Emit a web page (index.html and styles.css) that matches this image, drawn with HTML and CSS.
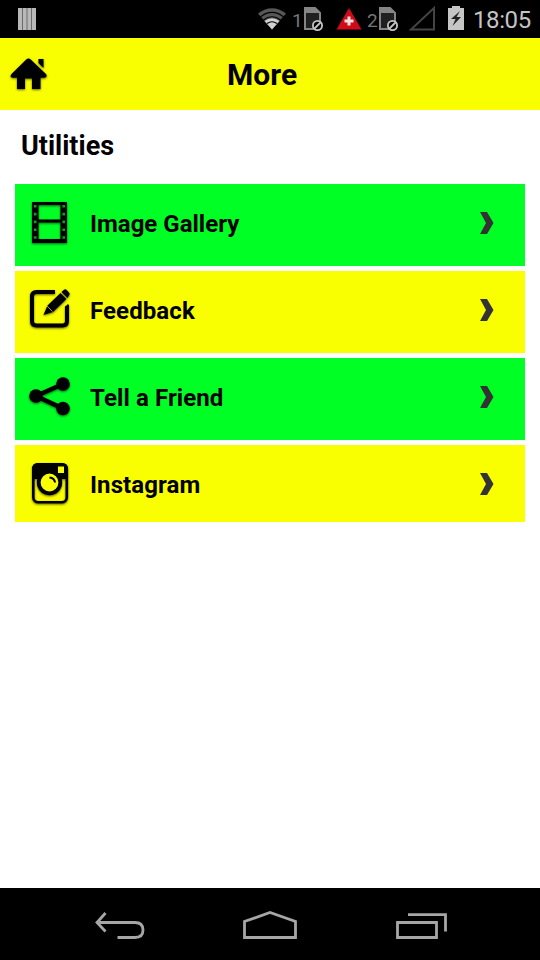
FILE: index.html
```html
<!DOCTYPE html>
<html lang="en">
<head>
    <meta charset="UTF-8">
    <meta name="viewport" content="width=device-width, initial-scale=1.0">
    <title>More</title>
    <link rel="stylesheet" href="styles.css">
</head>
<body>
    <!-- Status Bar -->
    <div class="status-bar">
        <svg class="bars" width="18" height="22" viewBox="0 0 18 22">
            <path fill="#b8b8b8" d="M0 0h18v22H0z"/>
            <path stroke="#6a6a6a" d="M4.5 0v22M9 0v22M13.5 0v22"/>
        </svg>
        <svg class="wifi" width="30" height="22" viewBox="0 0 30 22">
            <path fill="#575757" d="M0 5.5Q14-5 28 5.5L14 21.500z"/>
            <path fill="#d0d0d0" d="M6.500 13Q14 7.500 21.500 13L14 21.500z"/>
            <path fill="none" stroke="#000" stroke-width="1.1" d="M2.500 8.700Q14 0 25.500 8.700M5.500 12Q14 5.500 22.500 12M9 15.500Q14 12 19 15.500"/>
        </svg>
        <span class="sim-number">1</span>
        <svg class="sim" width="20" height="24" viewBox="0 0 20 24">
            <path fill="#202020" stroke="#858585" stroke-width="2" d="M1 1h10l5 5v16H1z"/>
            <path fill="#858585" d="M1 1h10l5 5H1z"/>
            <circle cx="13.500" cy="18.500" r="4.600" fill="#000" stroke="#c4c4c4" stroke-width="1.800"/>
            <path stroke="#c4c4c4" stroke-width="1.800" d="M10.500 21.500l6-6"/>
        </svg>
        <svg class="alert" width="26" height="22" viewBox="0 0 26 22">
            <path fill="#cf0a1b" d="M13 0l12.500 21.500H.5z"/>
            <path stroke="#eee2dc" stroke-width="3" d="M13 8.500v9M8.500 13h9"/>
        </svg>
        <span class="sim-number second">2</span>
        <svg class="sim" width="20" height="24" viewBox="0 0 20 24">
            <path fill="#202020" stroke="#858585" stroke-width="2" d="M1 1h10l5 5v16H1z"/>
            <path fill="#858585" d="M1 1h10l5 5H1z"/>
            <circle cx="13.500" cy="18.500" r="4.600" fill="#000" stroke="#c4c4c4" stroke-width="1.800"/>
            <path stroke="#c4c4c4" stroke-width="1.800" d="M10.500 21.500l6-6"/>
        </svg>
        <svg class="signal" width="28" height="26" viewBox="0 0 28 26">
            <path fill="none" stroke="#444" stroke-width="2" d="M26 3v21.500H3z"/>
        </svg>
        <svg class="battery" width="16" height="24" viewBox="0 0 16 24">
            <path fill="#c6c6c6" d="M4 0h8v2h4v22H0V2h4z"/>
            <path fill="#222" d="M12 5L3 13h4.500L4.500 20l8.500-9H8.500z"/>
        </svg>
        <span class="clock">18:05</span>
    </div>

    <!-- Header -->
    <div class="header">
        <svg class="home-icon shadow" width="38" height="36" viewBox="0 0 38 36">
            <path d="M18.500 1.500q-1.200 0-2.500 1.200L1.500 17q-2.500 3.500 1.500 3.800h4V32h8V21.500h7V32h8.500V20.800H34q4-.5 2-3.800L21 2.700q-1.300-1.200-2.500-1.200zM28.500 2H33.500v9l-5-5z"/>
        </svg>
        <h1>More</h1>
    </div>

    <!-- Utilities List -->
    <div class="content">
        <h2>Utilities</h2>
        <div class="menu">
            <div class="menu-item green">
                <svg class="icon shadow" viewBox="0 0 44 44">
                    <path fill-rule="evenodd" d="M4 1h35v41H4zM10.500 4v14.500h22V4zM10.500 21.500V38h22V21.500z"/>
                    <path stroke="#00a818" stroke-width="2.600" stroke-dasharray="2.600 5.200" d="M7.200 4v36M35.700 4v36"/>
                </svg>
                <span class="label">Image Gallery</span>
                <svg class="arrow" viewBox="0 0 16 22"><path d="M1 0h7l6.500 11L8 22H1l6-11z"/></svg>
            </div>
            <div class="menu-item yellow">
                <svg class="icon shadow" viewBox="0 0 44 44">
                    <path fill="none" stroke="#000" stroke-width="4" d="M27 4H8.500Q4 4 4 8.500v24.500q0 4.500 4.500 4.500h26q4.500 0 4.500-4.500V18l-.5-.5"/>
                    <path d="M15.500 27l4-9.500L32.500 5l6 6L25 24zM33.500 4l2.500-2.200q1.200-1 2.400 0l2.800 2.900q1 1.200 0 2.400L39.500 10z"/>
                    <path stroke="#aaa900" d="M19 18l5.500 5.500"/>
                </svg>
                <span class="label wide">Feedback</span>
                <svg class="arrow" viewBox="0 0 16 22"><path d="M1 0h7l6.500 11L8 22H1l6-11z"/></svg>
            </div>
            <div class="menu-item green">
                <svg class="icon shadow" viewBox="0 0 44 44">
                    <path fill="none" stroke="#000" stroke-width="4.500" d="M35 9L8 21l27 12.500"/>
                    <circle cx="35" cy="9" r="6.800"/>
                    <circle cx="8" cy="21" r="6.800"/>
                    <circle cx="35" cy="33.500" r="6.800"/>
                </svg>
                <span class="label wide">Tell a Friend</span>
                <svg class="arrow" viewBox="0 0 16 22"><path d="M1 0h7l6.500 11L8 22H1l6-11z"/></svg>
            </div>
            <div class="menu-item yellow last">
                <svg class="icon shadow" viewBox="0 0 44 44">
                    <rect x="5.300" y="2.300" width="33.500" height="38" rx="5" fill="none" stroke="#000" stroke-width="2.600"/>
                    <path d="M4 17V7q0-6 6-6h24q6 0 6 6v10z"/>
                    <path fill="#f9ff00" d="M30 4.500h6v6.500h-6z"/>
                    <circle cx="21.500" cy="20.500" r="10.800" fill="#f9ff00" stroke="#000" stroke-width="3.800"/>
                    <path fill="none" stroke="#000" stroke-width="2" d="M21.500 15.500q5 .5 5.500 5"/>
                </svg>
                <span class="label wide">Instagram</span>
                <svg class="arrow" viewBox="0 0 16 22"><path d="M1 0h7l6.500 11L8 22H1l6-11z"/></svg>
            </div>
        </div>
    </div>

    <!-- Navigation Bar -->
    <div class="nav-bar">
        <svg width="52" height="30" viewBox="0 0 52 30">
            <path d="M11.500 2L3 11.500l8.500 9M3 11.500h38q8 0 8 7.500t-8 7.500H23.500"/>
        </svg>
        <svg width="56" height="30" viewBox="0 0 56 30">
            <path d="M2.500 26.500V10.500L28 1.500 53.500 10.500v16z"/>
        </svg>
        <svg width="54" height="30" viewBox="0 0 54 30">
            <path d="M3.500 11.500h39v15h-39zM14 3.700h37.500V20.500"/>
        </svg>
    </div>
</body>
</html>
```
FILE: styles.css
```css
/* General Reset */
* {
    margin: 0;
    padding: 0;
    box-sizing: border-box;
}

body {
    display: flex;
    flex-direction: column;
    height: 100vh;
    font-family: Roboto, Arial, sans-serif;
    background: #fff;
    color: #000;
    overflow: hidden;
}

svg {
    display: block;
    flex-shrink: 0;
    overflow: visible;
}

.shadow {
    filter: drop-shadow(0 1px 1px rgba(0, 0, 0, 0.6));
}

/* Status Bar */
.status-bar {
    display: flex;
    height: 38px;
    padding-left: 18px;
    background: #000;
}

.bars {
    margin-top: 8px;
}

.wifi {
    margin: 8px 0 0 222px;
}

.sim-number {
    width: 10px;
    margin: 8px 2px 0 4px;
    font-size: 19px;
    line-height: 26px;
    color: #777;
}

.sim-number.second {
    margin-left: 5px;
}

.sim {
    margin-top: 7px;
}

.alert {
    margin: 8px 0 0 12px;
}

.signal {
    margin: 5px 0 0 9px;
}

.battery {
    margin: 6px 0 0 12px;
}

.clock {
    margin-left: 9px;
    font-size: 24px;
    line-height: 40px;
    letter-spacing: -0.4px;
    color: #c4c4c4;
}

/* Header */
.header {
    display: flex;
    align-items: center;
    height: 72px;
    padding: 1px 0 0 10px;
    background: #f9ff00;
}

h1 {
    margin-left: 179px;
    font-size: 30px;
    line-height: 36px;
}

/* Utilities List */
.content {
    flex: 1;
    padding: 18px 15px 0;
}

h2 {
    padding-left: 6px;
    font-size: 27px;
    line-height: 36px;
}

.menu {
    display: flex;
    flex-direction: column;
    gap: 5px;
    margin-top: 20px;
}

.menu-item {
    display: flex;
    align-items: flex-start;
    height: 82px;
    padding: 17px 30px 0 13px;
}

.menu-item.last {
    height: 77px;
}

.green {
    background: #00ff24;
}

.yellow {
    background: #f9ff00;
}

.icon {
    width: 44px;
    height: 44px;
}

.label {
    flex: 1;
    margin-left: 18px;
    font-size: 24px;
    font-weight: bold;
    line-height: 46px;
}

.label.wide {
    letter-spacing: 0.1px;
}

.arrow {
    width: 16px;
    height: 22px;
    margin-top: 10.5px;
    fill: #333;
}

/* Navigation Bar */
.nav-bar {
    display: flex;
    justify-content: space-between;
    height: 72px;
    padding: 23px 92px 0 94px;
    background: #000;
}

.nav-bar path {
    fill: none;
    stroke: #a6a6a6;
    stroke-width: 2.800;
}
```
